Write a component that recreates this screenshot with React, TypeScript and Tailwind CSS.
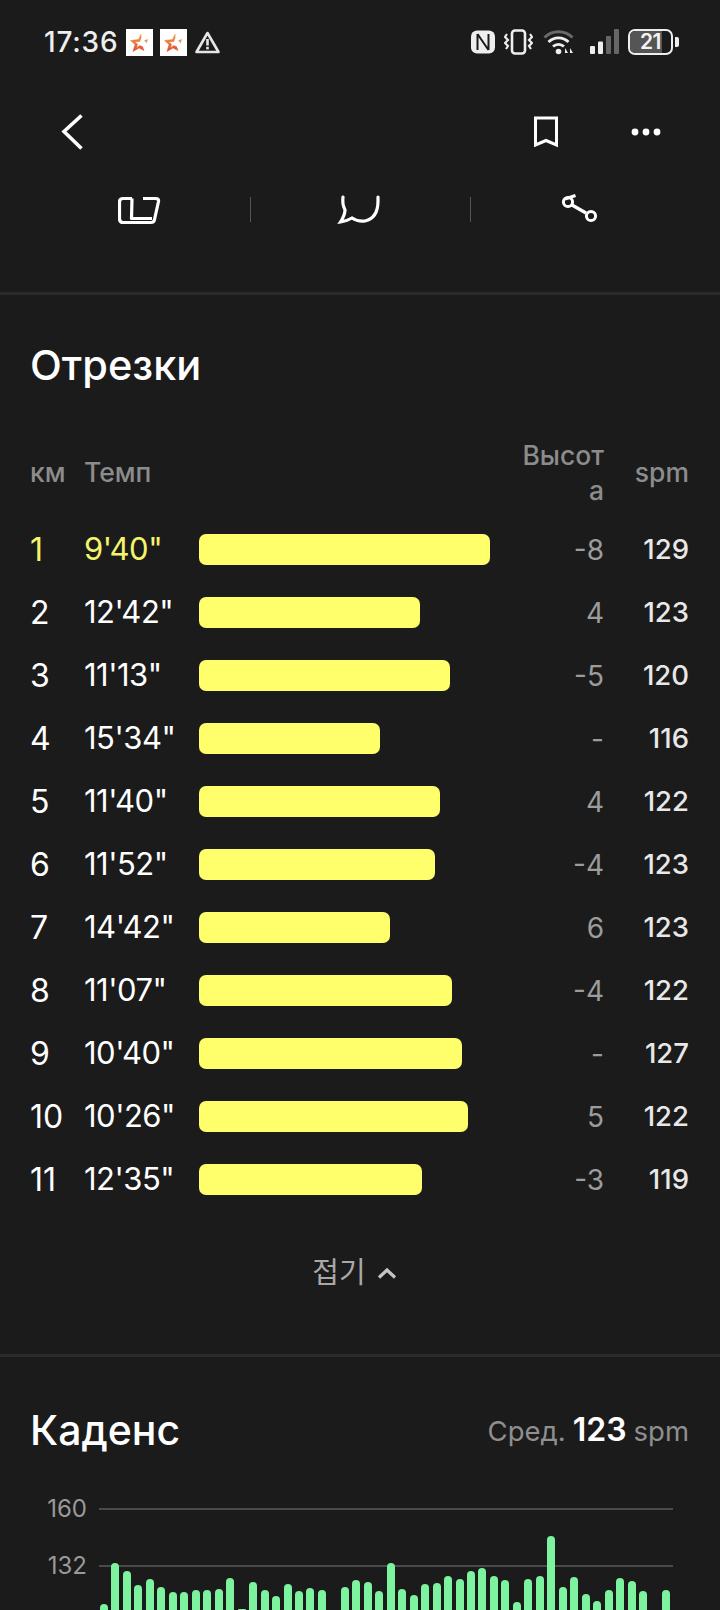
import React from "react";

const rows = [
  ["1", "9'40\"", 291, "-8", "129"],
  ["2", "12'42\"", 221, "4", "123"],
  ["3", "11'13\"", 251, "-5", "120"],
  ["4", "15'34\"", 181, "-", "116"],
  ["5", "11'40\"", 241, "4", "122"],
  ["6", "11'52\"", 236, "-4", "123"],
  ["7", "14'42\"", 191, "6", "123"],
  ["8", "11'07\"", 253, "-4", "122"],
  ["9", "10'40\"", 263, "-", "127"],
  ["10", "10'26\"", 269, "5", "122"],
  ["11", "12'35\"", 223, "-3", "119"],
] as const;

const tops = [
  1604, 1563, 1571, 1585, 1579, 1587, 1592, 1592, 1590, 1590, 1589, 1578, 1609, 1582, 1590, 1596, 1584, 1591, 1588,
  1590, 1625, 1587, 1580, 1582, 1591, 1563, 1589, 1595, 1584, 1583, 1576, 1579, 1571, 1568, 1576, 1580, 1602, 1579,
  1576, 1536, 1587, 1577, 1594, 1601, 1590, 1578, 1581, 1591, 1625, 1590,
];

function Star({ id }: { id: string }) {
  return (
    <div className="w-[27px] h-[27px] bg-white">
      <svg width="27" height="27" viewBox="0 0 27 27" fill="none">
        <defs>
          <linearGradient id={id} x1="0" y1="0" x2="0" y2="1">
            <stop offset="0" stopColor="#efa04a" />
            <stop offset="1" stopColor="#e2492a" />
          </linearGradient>
        </defs>
        <path
          d="M15 5 L12.5 10.5 L4.5 11.5 L9 15.5 L7 22.5 L13 19 L18 21.5 L16.5 17.5 L13.5 16.5 L10.5 19 L11.5 15 L8.5 13 L13.8 12.5 L15.2 8.5 Z"
          fill={`url(#${id})`}
          stroke={`url(#${id})`}
          strokeWidth="0.5"
        />
        <path d="M18 11.5 L22 10 L20.5 14.5 L19.5 12.8 Z" fill="#e8945a" />
      </svg>
    </div>
  );
}

function StatusLeft() {
  return (
    <div className="flex items-center">
      <span className="text-[28px] font-medium tracking-[0.8px] text-[#eeeeee] leading-none w-[82px]">17:36</span>
      <Star id="s1" />
      <div className="w-[7px]" />
      <Star id="s2" />
      <svg className="ml-[7px]" width="27" height="24" viewBox="0 0 27 24" fill="none">
        <path d="M13.5 3 L24.5 22 H2.5 Z" stroke="#e6e6e6" strokeWidth="2.6" strokeLinejoin="round" />
        <rect x="12.2" y="9" width="2.6" height="6.5" fill="#e6e6e6" />
        <rect x="12.2" y="16.8" width="2.6" height="2.6" fill="#e6e6e6" />
      </svg>
    </div>
  );
}

function StatusRight() {
  return (
    <div className="flex items-center">
      <svg width="24" height="24" viewBox="0 0 24 24" fill="none">
        <rect x="0" y="0.5" width="24" height="23" rx="6" fill="#eeeeee" />
        <path d="M6.5 4 V20 M6.5 4 L17.5 20 M17.5 20 V4" stroke="#1b1b1b" strokeWidth="2" />
      </svg>
      <svg className="ml-[9px]" width="29" height="26" viewBox="0 0 29 26" fill="none">
        <rect x="8" y="1.5" width="13" height="23" rx="3" stroke="#eeeeee" strokeWidth="2.6" />
        <path
          d="M3 5 L1 8 L4 11 L1 14 L4 17 L2 20 M26 5 L28 8 L25 11 L28 14 L25 17 L27 20"
          stroke="#eeeeee"
          strokeWidth="2.2"
        />
      </svg>
      <svg className="ml-[10px]" width="32" height="26" viewBox="0 0 32 26" fill="none">
        <path d="M1.5 8.5 A20 20 0 0 1 29.5 8.5" stroke="#6a6a6a" strokeWidth="3" />
        <path d="M5.5 13 A14 14 0 0 1 25.5 13" stroke="#eeeeee" strokeWidth="2.8" />
        <path d="M10 17.5 A8 8 0 0 1 21 17.5" stroke="#eeeeee" strokeWidth="2.8" />
        <circle cx="15.5" cy="22.5" r="2.8" fill="#eeeeee" />
        <path d="M22 24 V19 L25 24 Z M27 19 L30 24 H27 Z" fill="#eeeeee" />
      </svg>
      <svg className="ml-[15px]" width="29" height="26" viewBox="0 0 29 26" fill="none">
        <rect x="0" y="17" width="5" height="8" rx="1" fill="#eeeeee" />
        <rect x="8" y="12.5" width="5" height="12.5" rx="1" fill="#eeeeee" />
        <rect x="16" y="7" width="5" height="18" rx="1" fill="#666666" />
        <rect x="24" y="0" width="5" height="25" rx="1" fill="#666666" />
      </svg>
      <div className="ml-[9px] relative flex items-center justify-center w-[45px] h-[26px] rounded-[7px] border-2 border-[#eeeeee]">
        <div className="absolute left-0 top-0 bottom-0 w-[32px] rounded-l-[5px] bg-[#555555]" />
        <span className="relative text-[21px] font-semibold text-[#f2f2f2] leading-[22px] tracking-[-0.5px]">21</span>
      </div>
      <div className="ml-[2px] w-[4px] h-[10px] bg-[#eeeeee] rounded-r-[2px]" />
    </div>
  );
}

function Tab({ children, divider }: { children: React.ReactNode; divider?: boolean }) {
  return (
    <div className="relative flex-1 flex items-center justify-center h-full">
      {divider && <div className="absolute left-0 top-[17px] w-px h-[25px] bg-[#555555]" />}
      {children}
    </div>
  );
}

export default function App() {
  return (
    <div
      className="w-[720px] h-[1610px] overflow-hidden bg-[#1b1b1b] text-white"
      style={{ fontFamily: 'Inter, "Noto Sans CJK KR", sans-serif' }}
    >
      <div className="h-[84px] flex items-center justify-between pl-[44px] pr-[41px]">
        <StatusLeft />
        <StatusRight />
      </div>

      <div className="h-[96px] flex items-center justify-between pl-[60px] pr-[59px]">
        <svg width="24" height="38" viewBox="0 0 24 38" fill="none">
          <path d="M21.5 2.5 L4 18.5 L21.5 35.5" stroke="#ffffff" strokeWidth="3.6" />
        </svg>
        <div className="flex items-center gap-[72px]">
          <svg width="26" height="32" viewBox="0 0 26 32" fill="none">
            <path d="M2.5 2 H23.5 V29 L13 24.5 L2.5 29 Z" stroke="#ffffff" strokeWidth="3" />
          </svg>
          <svg width="30" height="8" viewBox="0 0 30 8" fill="#ffffff">
            <circle cx="4" cy="4" r="3.4" />
            <circle cx="15" cy="4" r="3.4" />
            <circle cx="26" cy="4" r="3.4" />
          </svg>
        </div>
      </div>

      <div className="h-[58px] px-[30px] flex">
        <Tab>
          <svg className="mt-[1px]" width="44" height="30" viewBox="0 0 44 30" fill="none">
            <path
              d="M14 3.5 H5 Q1.5 3.5 1.5 7 V23.5 Q1.5 27.5 5 27.5 H33 Q36 27.5 36.5 24.5 L40.5 6.5 Q41 3.5 37.5 3.5 H25 M14 3.5 L13.5 23.5 H34"
              stroke="#ffffff"
              strokeWidth="3.2"
              strokeLinejoin="round"
            />
          </svg>
        </Tab>
        <Tab divider>
          <svg className="mr-[3px] mt-[2px]" width="44" height="30" viewBox="0 0 44 30" fill="none">
            <path
              d="M6 2 Q5 9 8 15 Q8 20 3.5 27 Q10 26 15 23 Q21 27 28 26 Q41 23 41 6 V2"
              stroke="#ffffff"
              strokeWidth="3.2"
              strokeLinecap="round"
            />
          </svg>
        </Tab>
        <Tab divider>
          <svg className="mt-[2px]" width="40" height="32" viewBox="0 0 40 32" fill="none">
            <path d="M5 5 L15.5 1.5" stroke="#ffffff" strokeWidth="3.2" />
            <circle cx="8" cy="8" r="4.6" stroke="#ffffff" strokeWidth="3" />
            <circle cx="31" cy="22" r="4.6" stroke="#ffffff" strokeWidth="3" />
            <path d="M12 11 L26 19" stroke="#ffffff" strokeWidth="3.2" />
          </svg>
        </Tab>
      </div>

      <div className="mt-[54px] h-[3px] bg-[#2a2a2a]" />

      <section className="pl-[30px] pr-[31px]">
        <h2 className="mt-[35px] h-[72px] flex items-center text-[41.5px] font-medium leading-none">Отрезки</h2>

        <div className="mt-[36px] h-[70px] flex items-center text-[26.5px] font-medium text-[#8c8c8c]">
          <div className="w-[55px]">км</div>
          <div className="w-[405px] -ml-px">Темп</div>
          <div className="w-[115px] flex justify-end">
            <div className="w-[82px] break-all text-right leading-[35px]">Высота</div>
          </div>
          <div className="flex-1 text-right">spm</div>
        </div>

        <div className="mt-[10px]">
          {rows.map(([km, pace, width, alt, spm], i) => (
            <div
              key={km}
              className={`h-[63px] flex items-center text-[32px] ${i === 0 ? "text-[#f4f56a]" : "text-white"}`}
            >
              <div className="w-[55px]">{km}</div>
              <div className="w-[114px] -ml-px mr-px text-[31px] -tracking-[0.5px]">{pace}</div>
              <div className="w-[291px]">
                <div className="h-[31px] rounded-[7px] bg-[#ffff6b]" style={{ width }} />
              </div>
              <div className="w-[114px] text-right text-[28px] text-[#9c9c9c]">{alt}</div>
              <div className="flex-1 text-right text-[27.5px] font-medium text-[#e8e8e8]">{spm}</div>
            </div>
          ))}
        </div>
      </section>

      <div className="mt-[31px] h-[62px] flex items-center justify-center gap-[11px] pr-[11px] text-[#a8a8a8]">
        <span className="text-[29px]">접기</span>
        <svg width="20" height="12" viewBox="0 0 20 12" fill="none">
          <path d="M2 10.5 L10 3 L18 10.5" stroke="#c4c4c4" strokeWidth="3.2" />
        </svg>
      </div>

      <div className="mt-[50px] h-[3px] bg-[#2a2a2a]" />

      <section className="pl-[30px] pr-[31px] mt-[37px] h-[72px] flex items-center justify-between">
        <h2 className="text-[41px] font-medium leading-none">Каденс</h2>
        <div className="text-[27.5px] text-[#8f8f8f] flex items-baseline gap-[7px]">
          <span>Сред.</span>
          <span className="text-[32px] font-semibold text-white">123</span>
          <span>spm</span>
        </div>
      </section>

      <div className="relative mt-[14px] h-[130px] overflow-hidden">
        {["160", "132"].map((label) => (
          <div key={label} className="h-[57px] flex items-center">
            <div className="w-[87px] text-right text-[24px] text-[#999999]">{label}</div>
            <div className="ml-[12px] w-[574px] h-[2px] bg-[#4a4a4a]" />
          </div>
        ))}
        <div className="absolute left-[100px] bottom-0 h-[130px] flex items-end gap-[3.47px]">
          {tops.map((top, i) => (
            <div
              key={i}
              className="w-[8px] rounded-t-full bg-[#7df3a0]"
              style={{ height: Math.max(0, 1610 - top) }}
            />
          ))}
        </div>
      </div>
    </div>
  );
}
